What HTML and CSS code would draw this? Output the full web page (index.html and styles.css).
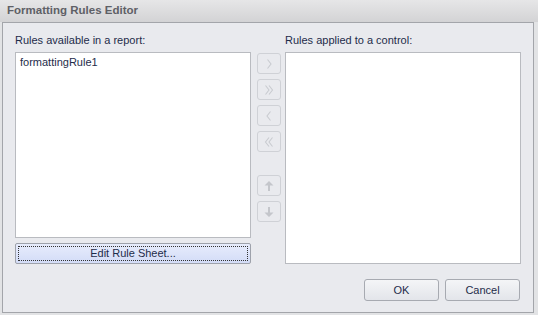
FILE: index.html
```html
<!DOCTYPE html>
<html lang="en">
<head>
    <meta charset="UTF-8">
    <title>Formatting Rules Editor</title>
    <link rel="stylesheet" href="styles.css">
</head>
<body>
    <div class="window">
        <div class="title">Formatting Rules Editor</div>

        <div class="panel">
            <div class="columns">
                <!-- Regras disponíveis -->
                <div class="side">
                    <div class="label">Rules available in a report:</div>
                    <div class="list list-left">
                        <div class="item">formattingRule1</div>
                    </div>
                    <button class="edit-btn"><span class="focus">Edit Rule Sheet...</span></button>
                </div>

                <!-- Botões de mover -->
                <div class="moves">
                    <button class="move" disabled>
                        <svg width="10" height="12" viewBox="0 0 10 12"><path d="M3.5 1.5 L7 6 L3.5 10.5" /></svg>
                    </button>
                    <button class="move" disabled>
                        <svg width="10" height="12" viewBox="0 0 10 12"><path d="M1.5 1.5 L5 6 L1.5 10.5 M5 1.5 L8.5 6 L5 10.5" /></svg>
                    </button>
                    <button class="move" disabled>
                        <svg width="10" height="12" viewBox="0 0 10 12"><path d="M6.5 1.5 L3 6 L6.5 10.5" /></svg>
                    </button>
                    <button class="move" disabled>
                        <svg width="10" height="12" viewBox="0 0 10 12"><path d="M5 1.5 L1.5 6 L5 10.5 M8.5 1.5 L5 6 L8.5 10.5" /></svg>
                    </button>
                    <div class="spacer"></div>
                    <button class="move" disabled>
                        <svg width="10" height="12" viewBox="0 0 10 12"><path class="fill" d="M5 1 L9.5 5.5 L6 5.5 L6 11 L4 11 L4 5.5 L0.5 5.5 Z" /></svg>
                    </button>
                    <button class="move" disabled>
                        <svg width="10" height="12" viewBox="0 0 10 12"><path class="fill" d="M5 11 L9.5 6.5 L6 6.5 L6 1 L4 1 L4 6.5 L0.5 6.5 Z" /></svg>
                    </button>
                </div>

                <!-- Regras aplicadas -->
                <div class="side">
                    <div class="label">Rules applied to a control:</div>
                    <div class="list list-right"></div>
                </div>
            </div>

            <div class="footer">
                <button class="btn">OK</button>
                <button class="btn">Cancel</button>
            </div>
        </div>
    </div>
</body>
</html>
```

FILE: styles.css
```css
/* Janela */
body {
    margin: 0;
    font-family: 'Liberation Sans', Arial, sans-serif;
    font-size: 11px;
    background: #e4e4e6;
}

.window {
    width: 538px;
    height: 315px;
    background: #e2e3e5;
}

.title {
    height: 22px;
    line-height: 21px;
    padding-left: 7px;
    font-weight: bold;
    font-size: 11.5px;
    color: #5e6066;
    background: linear-gradient(#e6e6e7, #d3d3d5);
}

.panel {
    margin: 0 4px 0 2px;
    border: 1px solid #a3a5aa;
    background: #e9eaee;
    padding: 10px 12px 11px 12px;
    height: 268px;
}

.columns {
    display: flex;
}

.side {
    width: 236px;
}

.label {
    height: 19px;
    line-height: 14px;
    color: #1e2c4a;
}

.list {
    background: #fff;
    border: 1px solid #b9bbc0;
    box-sizing: border-box;
}

.list-left {
    height: 186px;
}

.list-right {
    height: 212px;
}

.item {
    padding: 3px 4px;
    line-height: 13px;
    color: #1e2c4a;
}

.edit-btn {
    margin-top: 5px;
    width: 236px;
    height: 21px;
    padding: 2px;
    border: 1px solid #9ea2ab;
    border-radius: 2px;
    background: linear-gradient(#e7ecfc, #d3dcf7);
    font: inherit;
    color: #1e2c4a;
}

.edit-btn .focus {
    display: block;
    height: 15px;
    line-height: 13px;
    border: 1px dotted #333;
    box-sizing: border-box;
}

/* Botões do meio */
.moves {
    width: 34px;
    padding: 20px 4px 0 6px;
    box-sizing: border-box;
    display: flex;
    flex-direction: column;
    gap: 5px;
}

.move {
    width: 24px;
    height: 21px;
    padding: 0;
    border: 1px solid #cfd1d6;
    border-radius: 3px;
    background: #e9eaee;
    display: flex;
    align-items: center;
    justify-content: center;
}

.move svg path {
    fill: none;
    stroke: #c9cbd0;
    stroke-width: 1.1;
}

.move svg path.fill {
    fill: #c4c6cb;
    stroke: none;
}

.spacer {
    height: 13px;
}

/* Rodapé */
.footer {
    margin-top: 15px;
    margin-right: 1px;
    display: flex;
    justify-content: flex-end;
    gap: 6px;
}

.btn {
    width: 75px;
    height: 22px;
    border: 1px solid #a7aab1;
    border-radius: 3px;
    background: linear-gradient(#f4f5f7, #e3e5ea);
    font: inherit;
    color: #1e2c4a;
}
```
